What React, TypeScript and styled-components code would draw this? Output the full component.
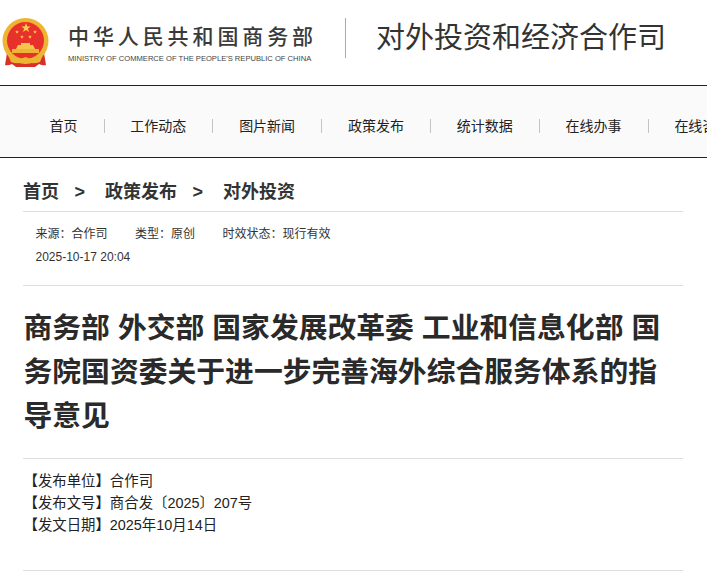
import React from "react";
import styled, { createGlobalStyle } from "styled-components";

const Global = createGlobalStyle`
  html, body { margin: 0; padding: 0; background: #fff; overflow: hidden; }
  body { font-family: "Liberation Sans", "Noto Sans CJK SC", sans-serif; color: #222; width: 707px; height: 571px; }
`;

const Page = styled.div`
  width: 707px;
  height: 571px;
  overflow: hidden;
`;

const Header = styled.header`
  height: 85px;
  display: flex;
  align-items: flex-start;
  box-sizing: border-box;
  padding: 18px 0 0 2px;
`;

const Emblem = styled.svg`
  width: 47px;
  height: 50px;
  flex: none;
`;

const LogoText = styled.div`
  margin: 7px 0 0 19px;
  width: 245px;
  flex: none;
`;

const LogoName = styled.div`
  font-size: 21px;
  line-height: 24px;
  letter-spacing: 3.9px;
  font-weight: 500;
  color: #3a3a3a;
  white-space: nowrap;
`;

const LogoEnglish = styled.div`
  font-size: 7.6px;
  line-height: 12px;
  margin-top: 4px;
  color: #444;
  white-space: nowrap;
`;

const HeaderRule = styled.div`
  width: 1px;
  height: 40px;
  background: #aaa;
  margin-left: 32px;
  flex: none;
`;

const DeptName = styled.div`
  margin: 0 0 0 30px;
  font-size: 29px;
  line-height: 40px;
  color: #333;
  white-space: nowrap;
`;

const Nav = styled.nav`
  height: 63px;
  box-sizing: content-box;
  border-top: 1px solid #222;
  border-bottom: 1px solid #222;
  background: #fafafa;
  display: flex;
  align-items: center;
  padding: 8px 0 0 23.5px;
  white-space: nowrap;
`;

const NavItem = styled.a<{ $last?: boolean }>`
  flex: none;
  padding: 0 26px;
  font-size: 14px;
  line-height: 14px;
  color: #222;
  border-right: ${(p) => (p.$last ? "none" : "1px solid #c4c4c4")};
  margin-right: -0.2px;
`;

const Content = styled.main`
  width: 660px;
  margin-left: 23px;
`;

const Crumbs = styled.div`
  height: 54px;
  box-sizing: border-box;
  padding: 21px 0 0 0;
  border-bottom: 1px solid #ddd;
  display: flex;
  font-size: 18px;
  line-height: 26px;
  font-weight: 700;
  color: #333;
`;

const CrumbSep = styled.span`
  margin: 0 20px 0 15.5px;
`;

const Meta = styled.div`
  height: 74px;
  box-sizing: border-box;
  padding-top: 11px;
  padding-left: 12.5px;
  border-bottom: 1px solid #ddd;
  font-size: 12px;
  line-height: 23px;
  color: #333;
`;

const MetaRow = styled.div`
  display: flex;
  gap: 27.5px;
`;

const Title = styled.h1`
  margin: 0;
  padding: 20px 0 20px 0.5px;
  font-size: 28.8px;
  line-height: 44px;
  font-weight: 700;
  color: #2a2a2a;
  border-bottom: 1px solid #ddd;
`;

const Info = styled.div`
  height: 112px;
  box-sizing: border-box;
  padding: 11px 0 0 0.5px;
  border-bottom: 1px solid #ddd;
  font-size: 14.4px;
  line-height: 22px;
  color: #222;
`;

const star = (cx: number, cy: number, r: number) => {
  const pts: string[] = [];
  for (let i = 0; i < 10; i++) {
    const rad = i % 2 === 0 ? r : r * 0.4;
    const a = (Math.PI * i) / 5 - Math.PI / 2;
    pts.push(`${(cx + rad * Math.cos(a)).toFixed(2)},${(cy + rad * Math.sin(a)).toFixed(2)}`);
  }
  return pts.join(" ");
};

const navItems = ["首页", "工作动态", "图片新闻", "政策发布", "统计数据", "在线办事", "在线咨询"];

export default function App() {
  return (
    <Page>
      <Global />
      <Header>
        <Emblem viewBox="0 0 47 50">
          <path d="M5 35 L3 47 Q6 48 10 46 L14 49 L33 49 L37 46 Q41 48 44 47 L42 35 Z" fill="#d9302a" />
          <circle cx="23.5" cy="23" r="23" fill="#eeb433" />
          <circle cx="23.5" cy="22.5" r="18.5" fill="#e8312a" />
          <polygon points={star(24, 10, 5)} fill="#f7d34a" />
          <polygon points={star(15, 14, 2)} fill="#f7d34a" />
          <polygon points={star(20, 19, 2)} fill="#f7d34a" />
          <polygon points={star(28, 19, 2)} fill="#f7d34a" />
          <polygon points={star(33, 14, 2)} fill="#f7d34a" />
          <path d="M19 25 H28 V27 H31 L33 31 H14 L16 27 H19 Z" fill="#f2c64a" />
          <path d="M10 31 H37 V35 H10 Z" fill="#eeb433" />
          <path d="M6 37 Q14 44 23.5 39 Q33 44 41 37 L38 44 Q30 47 23.5 43 Q17 47 9 44 Z" fill="#eeb433" />
        </Emblem>
        <LogoText>
          <LogoName>中华人民共和国商务部</LogoName>
          <LogoEnglish>MINISTRY OF COMMERCE OF THE PEOPLE'S REPUBLIC OF CHINA</LogoEnglish>
        </LogoText>
        <HeaderRule />
        <DeptName>对外投资和经济合作司</DeptName>
      </Header>
      <Nav>
        {navItems.map((n, i) => (
          <NavItem key={n} $last={i === navItems.length - 1}>{n}</NavItem>
        ))}
      </Nav>
      <Content>
        <Crumbs>
          <span>首页</span>
          <CrumbSep>&gt;</CrumbSep>
          <span>政策发布</span>
          <CrumbSep>&gt;</CrumbSep>
          <span>对外投资</span>
        </Crumbs>
        <Meta>
          <MetaRow>
            <span>来源：合作司</span>
            <span>类型：原创</span>
            <span>时效状态：现行有效</span>
          </MetaRow>
          <div>2025-10-17 20:04</div>
        </Meta>
        <Title>商务部 外交部 国家发展改革委 工业和信息化部 国务院国资委关于进一步完善海外综合服务体系的指导意见</Title>
        <Info>
          <div>【发布单位】合作司</div>
          <div>【发布文号】商合发〔2025〕207号</div>
          <div>【发文日期】2025年10月14日</div>
        </Info>
      </Content>
    </Page>
  );
}
